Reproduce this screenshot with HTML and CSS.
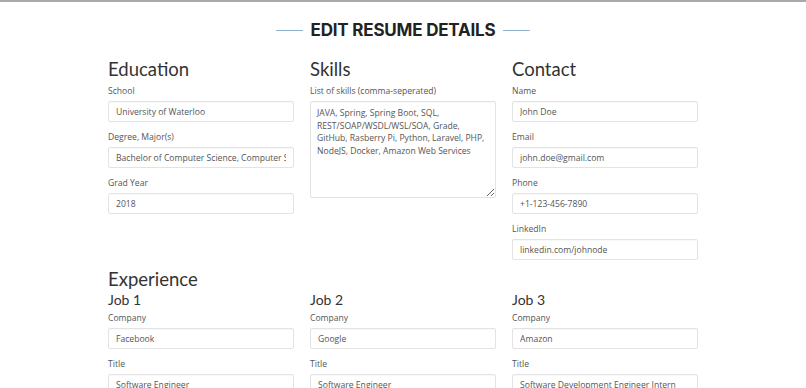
FILE: index.html
```html
<!DOCTYPE html>
<html lang="en">
<head>
    <meta charset="UTF-8">
    <meta name="viewport" content="width=device-width, initial-scale=1.0">
    <title>Edit Resume Details</title>
    <link rel="stylesheet" href="styles.css">
</head>
<body>
    <h1 class="page_title"><span class="title_line"></span>EDIT RESUME DETAILS<span class="title_line"></span></h1>

    <div class="container">
        <div class="row">
            <div class="col">
                <h2>Education</h2>
                <div class="form_group">
                    <label>School</label>
                    <input type="text" value="University of Waterloo">
                </div>
                <div class="form_group">
                    <label>Degree, Major(s)</label>
                    <input type="text" value="Bachelor of Computer Science, Computer Science">
                </div>
                <div class="form_group">
                    <label>Grad Year</label>
                    <input type="text" value="2018">
                </div>
            </div>
            <div class="col">
                <h2>Skills</h2>
                <div class="form_group">
                    <label>List of skills (comma-seperated)</label>
                    <textarea>JAVA, Spring, Spring Boot, SQL, REST/SOAP/WSDL/WSL/SOA, Grade, GitHub, Rasberry Pi, Python, Laravel, PHP, NodeJS, Docker, Amazon Web Services</textarea>
                </div>
            </div>
            <div class="col">
                <h2>Contact</h2>
                <div class="form_group">
                    <label>Name</label>
                    <input type="text" value="John Doe">
                </div>
                <div class="form_group">
                    <label>Email</label>
                    <input type="text" value="john.doe@gmail.com">
                </div>
                <div class="form_group">
                    <label>Phone</label>
                    <input type="text" value="+1-123-456-7890">
                </div>
                <div class="form_group">
                    <label>LinkedIn</label>
                    <input type="text" value="linkedin.com/johnode">
                </div>
            </div>
        </div>

        <h2 class="section_title">Experience</h2>
        <div class="row">
            <div class="col">
                <h3>Job 1</h3>
                <div class="form_group">
                    <label>Company</label>
                    <input type="text" value="Facebook">
                </div>
                <div class="form_group">
                    <label>Title</label>
                    <input type="text" value="Software Engineer">
                </div>
            </div>
            <div class="col">
                <h3>Job 2</h3>
                <div class="form_group">
                    <label>Company</label>
                    <input type="text" value="Google">
                </div>
                <div class="form_group">
                    <label>Title</label>
                    <input type="text" value="Software Engineer">
                </div>
            </div>
            <div class="col">
                <h3>Job 3</h3>
                <div class="form_group">
                    <label>Company</label>
                    <input type="text" value="Amazon">
                </div>
                <div class="form_group">
                    <label>Title</label>
                    <input type="text" value="Software Development Engineer Intern">
                </div>
            </div>
        </div>
    </div>
</body>
</html>
```

FILE: styles.css
```css
body {
    font-family: "Open Sans", Arial, sans-serif;
    margin: 0;
    padding: 0;
    border-top: 2px solid #a9a9a9;
    color: #555;
    background-color: #fff;
}

.page_title {
    display: flex;
    justify-content: center;
    align-items: center;
    gap: 8px;
    margin: 16px 0 15px 0;
    font-family: Inter, "Liberation Sans", sans-serif;
    font-weight: 700;
    font-size: 17px;
    letter-spacing: -0.2px;
    line-height: 24px;
    color: #222;
}

.title_line {
    display: inline-block;
    width: 27px;
    height: 1px;
    background-color: #8fb2d0;
}

.container {
    width: 590px;
    margin: 0 auto;
}

.row {
    display: grid;
    grid-template-columns: repeat(3, 186px);
    column-gap: 16px;
}

h2 {
    font-family: Lato, "Liberation Sans", sans-serif;
    font-weight: 400;
    font-size: 18.5px;
    line-height: 24px;
    color: #333;
    margin: 0 0 2px 0;
}

.section_title {
    margin: 0;
}

h3 {
    font-family: Lato, "Liberation Sans", sans-serif;
    font-weight: 400;
    font-size: 14px;
    line-height: 18px;
    color: #333;
    margin: 0 0 1px 0;
}

.form_group {
    padding-bottom: 7px;
}

.form_group label {
    display: block;
    font-size: 8.6px;
    line-height: 13px;
    padding-top: 2px;
    margin-bottom: 3px;
}

.form_group input,
.form_group textarea {
    display: block;
    box-sizing: border-box;
    width: 100%;
    height: 21px;
    padding: 0 7px;
    font-family: "Open Sans", Arial, sans-serif;
    font-size: 8.6px;
    color: #555;
    border: 1px solid #e3e3e3;
    border-radius: 2px;
    box-shadow: inset 0 1px 1px rgba(0, 0, 0, 0.03);
    background-color: #fff;
    outline: none;
}

.form_group textarea {
    height: 97px;
    padding: 5px 6px;
    line-height: 12.7px;
    resize: vertical;
}
```
